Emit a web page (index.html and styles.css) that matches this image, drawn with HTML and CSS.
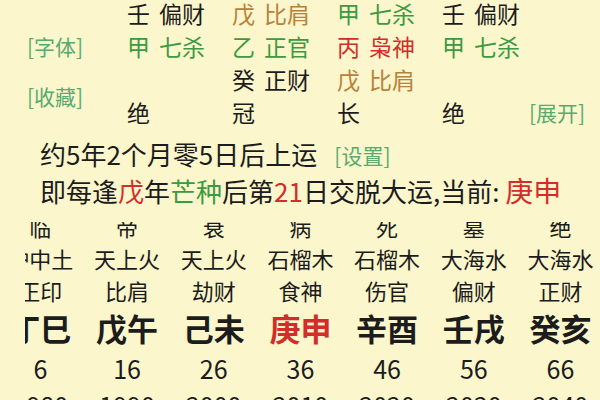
FILE: index.html
```html
<!DOCTYPE html>
<html lang="zh">
<head>
<meta charset="utf-8">
<link rel="stylesheet" href="styles.css">
</head>
<body>
<div class="page">
  <div class="pillars">
    <div class="cell"></div>
    <div class="cell label">[字体]</div>
    <div class="cell label span2">[收藏]</div>

    <div class="cell"><span class="stem">壬</span>偏财</div>
    <div class="cell green"><span class="stem">甲</span>七杀</div>
    <div class="cell"></div>
    <div class="cell">绝</div>

    <div class="cell brown"><span class="stem">戊</span>比肩</div>
    <div class="cell green"><span class="stem">乙</span>正官</div>
    <div class="cell"><span class="stem">癸</span>正财</div>
    <div class="cell">冠</div>

    <div class="cell green"><span class="stem">甲</span>七杀</div>
    <div class="cell red"><span class="stem">丙</span>枭神</div>
    <div class="cell brown"><span class="stem">戊</span>比肩</div>
    <div class="cell">长</div>

    <div class="cell"><span class="stem">壬</span>偏财</div>
    <div class="cell green"><span class="stem">甲</span>七杀</div>
    <div class="cell"></div>
    <div class="cell">绝</div>

    <div class="cell"></div>
    <div class="cell"></div>
    <div class="cell"></div>
    <div class="cell label more">[展开]</div>
  </div>

  <p class="line">约5年2个月零5日后上运<span class="label setting">[设置]</span></p>
  <p class="line">即每逢<span class="red">戊</span>年<span class="green">芒种</span>后第<span class="red">21</span>日交脱大运,当前: <span class="red current">庚申</span></p>

  <div class="dayun-clip">
    <div class="dayun">
      <div class="col"><div class="st">临</div><div class="ny">炉中土</div><div class="ss">正印</div><div class="gz">丁巳</div><div class="age">6</div><div class="yr">1980</div></div>
      <div class="col"><div class="st">帝</div><div class="ny">天上火</div><div class="ss">比肩</div><div class="gz">戊午</div><div class="age">16</div><div class="yr">1990</div></div>
      <div class="col"><div class="st">衰</div><div class="ny">天上火</div><div class="ss">劫财</div><div class="gz">己未</div><div class="age">26</div><div class="yr">2000</div></div>
      <div class="col"><div class="st">病</div><div class="ny">石榴木</div><div class="ss">食神</div><div class="gz red">庚申</div><div class="age">36</div><div class="yr">2010</div></div>
      <div class="col"><div class="st">死</div><div class="ny">石榴木</div><div class="ss">伤官</div><div class="gz">辛酉</div><div class="age">46</div><div class="yr">2020</div></div>
      <div class="col"><div class="st">墓</div><div class="ny">大海水</div><div class="ss">偏财</div><div class="gz">壬戌</div><div class="age">56</div><div class="yr">2030</div></div>
      <div class="col"><div class="st">绝</div><div class="ny">大海水</div><div class="ss">正财</div><div class="gz">癸亥</div><div class="age">66</div><div class="yr">2040</div></div>
    </div>
  </div>
</div>
</body>
</html>
```

FILE: styles.css
```css
* { box-sizing: border-box; }
html, body {
  margin: 0;
  padding: 0;
  background: #fbf6cb;
}
body {
  width: 600px;
  height: 400px;
  overflow: hidden;
  font-family: "Noto Sans CJK SC", "Noto Sans", sans-serif;
  font-weight: 400;
  color: #1c1c1c;
}
.page {
  width: 600px;
  height: 400px;
  overflow: hidden;
}
.pillars {
  display: grid;
  grid-template-columns: 127px 105px 105px 105px 87px 1fr;
  grid-template-rows: repeat(4, 33px);
  grid-auto-flow: column;
  margin-top: -3px;
  font-size: 23px;
  line-height: 33px;
}
.cell {
  white-space: nowrap;
}
.stem {
  margin-right: 9px;
}
.label {
  color: #58aa70;
  font-size: 21px;
  font-weight: 400;
}
.pillars .label {
  padding-left: 27px;
}
.pillars .label.more {
  padding-left: 0;
}
.span2 {
  grid-row: span 2;
  align-self: center;
}
.green { color: #3c9a42; }
.brown { color: #b7823c; }
.red { color: #d42c2a; }

.line {
  margin: 0;
  padding-left: 40px;
  font-size: 26px;
  line-height: 35px;
  white-space: nowrap;
}
.line:first-of-type {
  margin-top: 7px;
}
.setting {
  margin-left: 17px;
  font-size: 21px;
  vertical-align: 1px;
}
.current {
  font-size: 28px;
  line-height: 1;
}

.dayun-clip {
  margin-top: 14px;
  margin-left: 25px;
  height: 200px;
  overflow: hidden;
}
.dayun {
  display: grid;
  grid-template-columns: repeat(7, 86.7px);
  margin-left: -28px;
  margin-top: -12px;
  text-align: center;
  white-space: nowrap;
}
.st, .ny, .ss {
  font-size: 22px;
  line-height: 32px;
}
.gz {
  font-size: 31px;
  font-weight: 700;
  line-height: 44px;
}
.age, .yr {
  font-size: 25px;
  line-height: 36px;
}
.yr {
  line-height: 34px;
  padding-top: 2px;
}
```
